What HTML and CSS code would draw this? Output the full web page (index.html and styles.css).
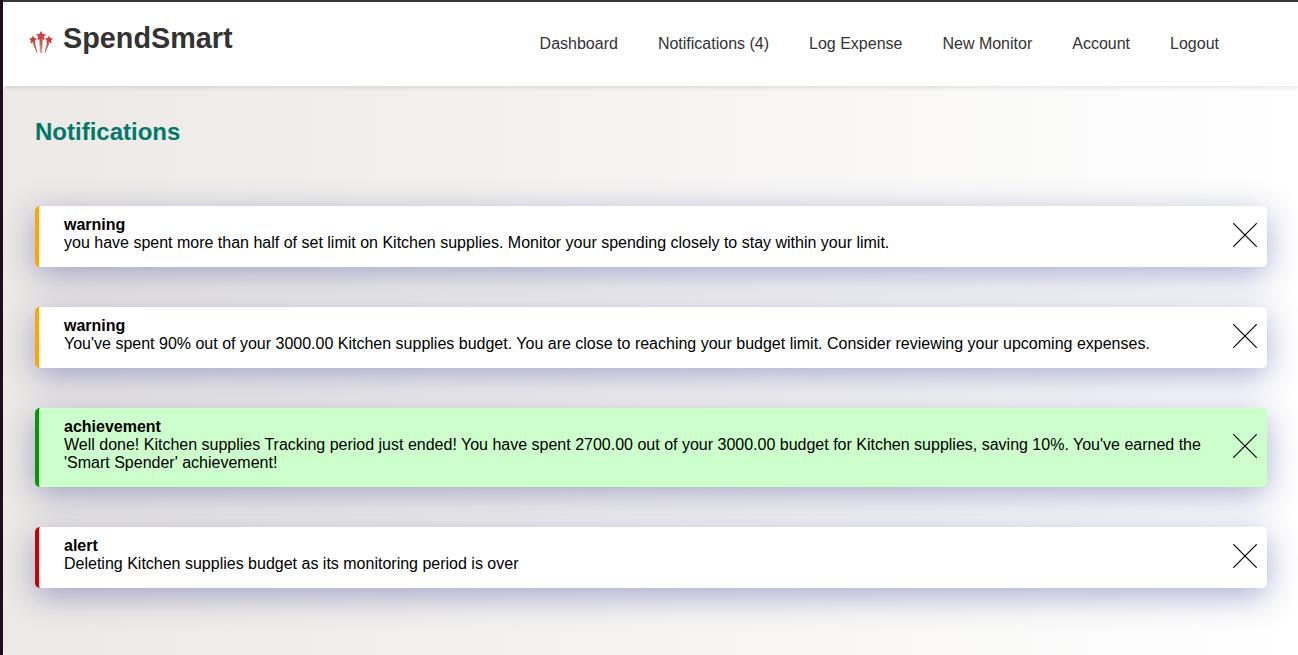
FILE: index.html
```html
<!DOCTYPE html>
<html lang="en">
<head>
<meta charset="utf-8">
<title>SpendSmart</title>
<link rel="stylesheet" href="styles.css">
</head>
<body>
<div class="page">
  <header class="navbar">
    <div class="brand">
      <svg class="logo" viewBox="0 0 24 24">
        <path d="M12 0l1.700 2.900 3.300.3-2.300 2.500.8 3.500-3.500-1.500-3.500 1.500.8-3.500L7 3.200l3.300-.3zM4 4.600l1.200 2.400 2.800.5-2 2 .6 3L4 11.200l-2.700 1.300.6-3L0 7.500 2.700 7zM20 4.600l1.200 2.400 2.800.5-2 2 .6 3-2.600-1.300-2.700 1.300.6-3-1.900-2 2.700-.5z"/>
        <path class="trail" d="M10.400 8.500l1.600-.7 1.600.7L13 22h-.5L12 10l-.5 12H11zM3.600 12l2.200-.5L8.500 22h-.6zM20.400 12l-2.200-.5L15.500 22h.6z"/>
      </svg>
      <span class="brand-name">SpendSmart</span>
    </div>
    <nav class="links">
      <a>Dashboard</a>
      <a>Notifications (4)</a>
      <a>Log Expense</a>
      <a>New Monitor</a>
      <a>Account</a>
      <a>Logout</a>
    </nav>
  </header>
  <main class="content">
    <h2 class="title">Notifications</h2>
    <div class="list">
      <article class="card warning">
        <div class="message"><strong>warning</strong><p>you have spent more than half of set limit on Kitchen supplies. Monitor your spending closely to stay within your limit.</p></div>
        <svg class="close" viewBox="0 0 24 24"><path d="M.3.3l23.400 23.400M23.700.3L.3 23.700"/></svg>
      </article>
      <article class="card warning">
        <div class="message"><strong>warning</strong><p>You've spent 90% out of your 3000.00 Kitchen supplies budget. You are close to reaching your budget limit. Consider reviewing your upcoming expenses.</p></div>
        <svg class="close" viewBox="0 0 24 24"><path d="M.3.3l23.400 23.400M23.700.3L.3 23.700"/></svg>
      </article>
      <article class="card achievement">
        <div class="message"><strong>achievement</strong><p>Well done! Kitchen supplies Tracking period just ended! You have spent 2700.00 out of your 3000.00 budget for Kitchen supplies, saving 10%. You've earned the 'Smart Spender' achievement!</p></div>
        <svg class="close" viewBox="0 0 24 24"><path d="M.3.3l23.400 23.400M23.700.3L.3 23.700"/></svg>
      </article>
      <article class="card alert">
        <div class="message"><strong>alert</strong><p>Deleting Kitchen supplies budget as its monitoring period is over</p></div>
        <svg class="close" viewBox="0 0 24 24"><path d="M.3.3l23.400 23.400M23.700.3L.3 23.700"/></svg>
      </article>
    </div>
  </main>
</div>
</body>
</html>
```
FILE: styles.css
```css
* { box-sizing: border-box; }
body {
  margin: 0;
  height: 655px;
  overflow: hidden;
  border-left: 3px solid #210d1c;
  font: 16px/18px "Liberation Sans", Arial, sans-serif;
  color: #000;
  background: #fff;
}
.page {
  height: 655px;
  border-top: 2px solid #38373a;
  background: #fff;
}
.navbar {
  position: relative;
  height: 84px;
  display: flex;
  justify-content: space-between;
  padding: 0 79px 0 26px;
  background: #fff;
  box-shadow: 0 2px 4px rgba(0, 0, 0, .1);
  z-index: 1;
}
.brand { display: flex; align-items: flex-start; gap: 10px; }
.logo { width: 24px; height: 24px; margin-top: 29px; fill: #c9403d; }
.trail { fill: #c4504d; }
.brand-name {
  margin-top: 19px;
  font-size: 28.800px;
  line-height: 34px;
  font-weight: bold;
  color: #333;
}
.links { display: flex; gap: 40px; padding-top: 33px; color: #333; }
.content {
  height: 569px;
  padding: 32px 31px 0 32px;
  border-radius: 5px 0 0 5px;
  background: linear-gradient(to right, #ece9e6, #fff);
}
.title {
  margin: 0 0 60px;
  font-size: 24px;
  line-height: 28px;
  color: #00796b;
}
.list { display: flex; flex-direction: column; gap: 40px; }
.card {
  display: flex;
  align-items: center;
  justify-content: space-between;
  padding: 10px 10px 15px 25px;
  border-left: 4px solid;
  border-radius: 5px;
  background: #fff;
  box-shadow: 0 8px 32px 0 rgba(31, 38, 135, .37);
}
.message { width: 1145px; }
.message strong { display: block; }
.message p { margin: 0; }
.warning { border-left-color: #ffa500; }
.achievement { border-left-color: #090; background: #cfc; }
.alert { border-left-color: #c00; }
.close {
  flex: none;
  width: 24px;
  height: 24px;
  position: relative;
  top: 1px;
  fill: none;
  stroke: #000;
  stroke-width: 1.200;
}
```
